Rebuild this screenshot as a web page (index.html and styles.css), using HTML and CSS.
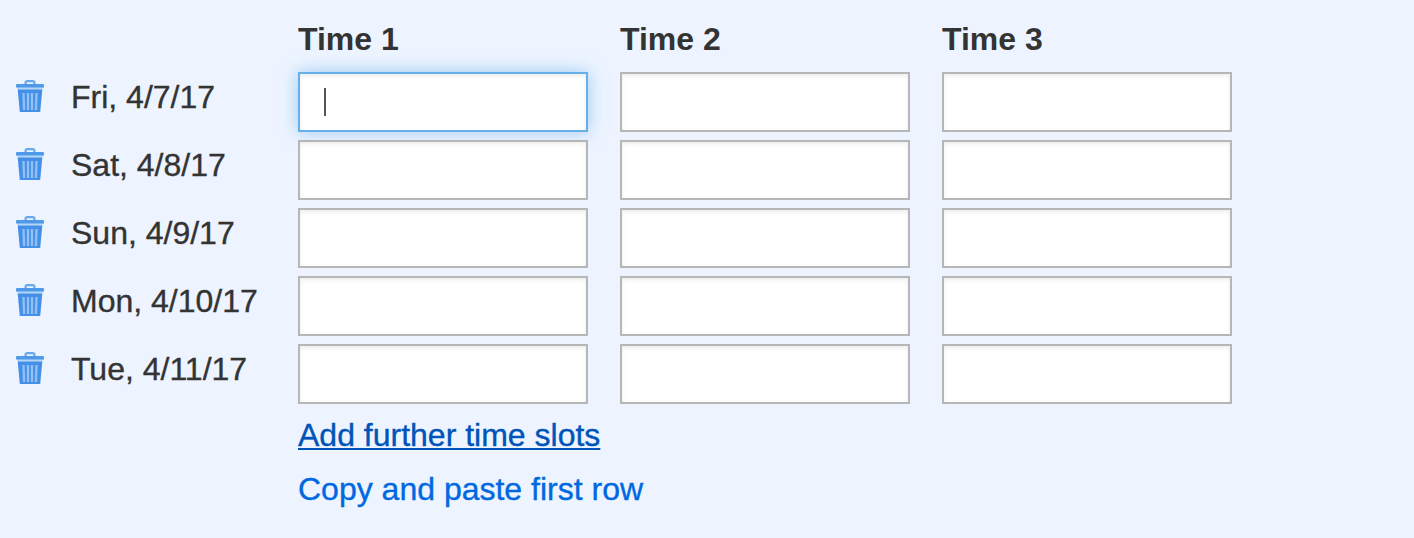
FILE: index.html
```html
<!DOCTYPE html>
<html lang="en">
<head>
<meta charset="utf-8">
<title>Time slots</title>
<link rel="stylesheet" href="styles.css">
</head>
<body>
<svg class="defs" aria-hidden="true">
  <symbol id="trash" viewBox="0 0 28 32">
    <path d="M9.6 4.5V2.8Q9.6 1.2 11.2 1.2h5.6q1.6 0 1.6 1.6v1.7" fill="none" stroke="#68a9ee" stroke-width="2.2"/>
    <rect x="0" y="4" width="28" height="3.8" rx="1.2" fill="#4f99ea"/>
    <rect x="1.5" y="7.8" width="25" height="2" fill="#b5d4f8"/>
    <path d="M1.7 9.6h24.6L24.2 32H3.8z" fill="#4590e7"/>
    <path d="M7.5 13 8.1 30M12 13V30M16 13V30M20.5 13 19.9 30" fill="none" stroke="#93c1f5" stroke-width="2.3"/>
  </symbol>
</svg>
<main class="slots">
  <div class="row head">
    <span class="title">Time 1</span><span class="title">Time 2</span><span class="title">Time 3</span>
  </div>
  <div class="row">
    <svg class="trash"><use href="#trash"/></svg><span class="date">Fri, 4/7/17</span>
    <div class="field focused"><span class="caret"></span></div><div class="field"></div><div class="field"></div>
  </div>
  <div class="row">
    <svg class="trash"><use href="#trash"/></svg><span class="date">Sat, 4/8/17</span>
    <div class="field"></div><div class="field"></div><div class="field"></div>
  </div>
  <div class="row">
    <svg class="trash"><use href="#trash"/></svg><span class="date">Sun, 4/9/17</span>
    <div class="field"></div><div class="field"></div><div class="field"></div>
  </div>
  <div class="row">
    <svg class="trash"><use href="#trash"/></svg><span class="date">Mon, 4/10/17</span>
    <div class="field"></div><div class="field"></div><div class="field"></div>
  </div>
  <div class="row">
    <svg class="trash"><use href="#trash"/></svg><span class="date">Tue, 4/11/17</span>
    <div class="field"></div><div class="field"></div><div class="field"></div>
  </div>
  <nav class="links">
    <a class="link active">Add further time slots</a>
    <a class="link">Copy and paste first row</a>
  </nav>
</main>
</body>
</html>
```
FILE: styles.css
```css
* { box-sizing: border-box; }
body {
  margin: 0;
  min-height: 538px;
  background: #edf4ff;
  color: #333;
  font: 32px/50px "Liberation Sans", Arial, sans-serif;
  -webkit-text-stroke: .35px currentColor;
}
.defs { position: absolute; width: 0; height: 0; }
.slots { padding: 6px 0 0 16px; }
.row {
  display: grid;
  grid-template-columns: 55px 227px repeat(3, 322px);
  height: 60px;
  margin-bottom: 8px;
}
.head {
  height: 66px;
  margin-bottom: 0;
  line-height: 66px;
  font-weight: bold;
  -webkit-text-stroke: 0;
}
.title:first-child { grid-column-start: 3; }
.trash { display: block; width: 28px; height: 32px; margin-top: 8px; }
.date { white-space: nowrap; }
.field {
  width: 290px;
  height: 60px;
  border: 2px solid #b6b6b6;
  background: #fff;
  box-shadow: inset 0 2px 4px rgba(0, 0, 0, .075);
}
.focused {
  padding: 14px 0 0 24px;
  border-color: #66afe9;
  box-shadow: inset 0 2px 4px rgba(0, 0, 0, .075), 0 0 16px rgba(102, 175, 233, .6);
}
.caret { display: block; width: 2px; height: 28px; background: #555; }
.links {
  display: flex;
  flex-direction: column;
  align-items: flex-start;
  margin: -4px 0 0 282px;
  line-height: 54px;
}
.link { color: #0068e0; }
.active {
  color: #0054b8;
  text-decoration: underline;
  text-decoration-thickness: 2px;
  text-underline-offset: 2px;
  text-decoration-skip-ink: none;
}
```
